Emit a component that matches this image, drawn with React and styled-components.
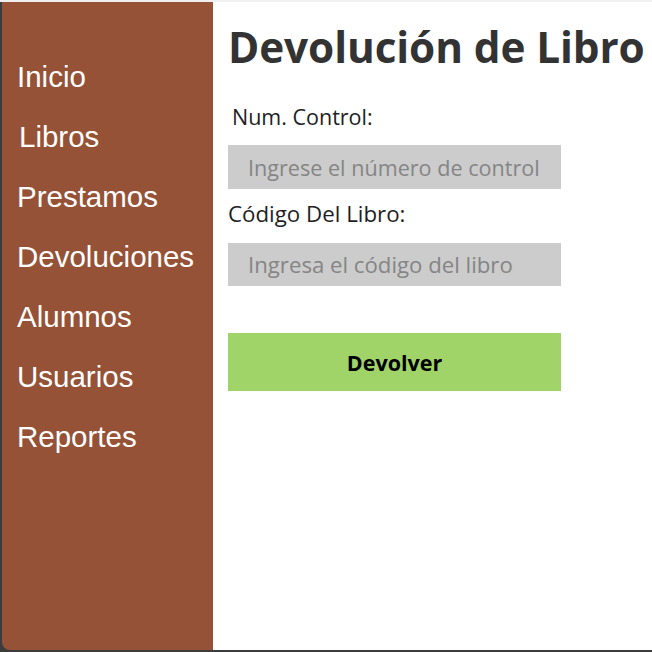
import React from 'react';
import styled, { createGlobalStyle } from 'styled-components';

const GlobalStyle = createGlobalStyle`
  * { box-sizing: border-box; }
  body {
    margin: 0;
    background: #3c3c3c;
  }
`;

const Window = styled.div`
  display: flex;
  width: 652px;
  height: 652px;
  background: #3c3c3c;
  border-top: 2px solid #f0f0f0;
  padding: 0 0 2px 2px;
  overflow: hidden;
`;

const Sidebar = styled.nav`
  flex: 0 0 211px;
  background: #955237;
  border-bottom-left-radius: 8px;
  padding-top: 45px;
`;

const NavList = styled.ul`
  list-style: none;
  margin: 0;
  padding: 0;
`;

const NavItem = styled.li`
  font-family: "Liberation Sans", Arial, sans-serif;
  font-size: 29.5px;
  line-height: 60px;
  color: #ffffff;
  padding-left: ${props => props.$indent || 15}px;
`;

const Main = styled.main`
  flex: 1;
  min-width: 0;
  overflow: hidden;
  background: #ffffff;
  padding: 19px 0 0 15px;
  font-family: "Open Sans", "Noto Sans", sans-serif;
  display: flex;
  flex-direction: column;
  align-items: flex-start;
  white-space: nowrap;
`;

const Title = styled.h1`
  margin: 0;
  font-size: 42.3px;
  line-height: 52px;
  font-weight: 700;
  color: #333333;
  letter-spacing: -0.1px;
`;

const Label = styled.label`
  display: block;
  font-size: ${props => props.$size || 21.5}px;
  line-height: 24px;
  color: #1e1e24;
  margin-top: ${props => props.$top}px;
  padding-left: ${props => props.$indent || 0}px;
`;

const Input = styled.input`
  display: block;
  width: 333px;
  height: ${props => props.$h}px;
  margin-top: ${props => props.$top}px;
  border: none;
  outline: none;
  background: #cccccc;
  padding: 0 0 0 20px;
  font-family: "Open Sans", "Noto Sans", sans-serif;
  font-size: ${props => props.$size || 21.6}px;
  color: #333;

  &::placeholder {
    color: #858585;
  }
`;

const Button = styled.button`
  width: 333px;
  height: 58px;
  margin-top: 47px;
  border: none;
  background: #a0d468;
  font-family: "Open Sans", "Noto Sans", sans-serif;
  font-size: 21.5px;
  font-weight: 700;
  color: #000000;
  cursor: pointer;
`;

const links = ['Inicio', 'Libros', 'Prestamos', 'Devoluciones', 'Alumnos', 'Usuarios', 'Reportes'];

export default function App() {
  return (
    <>
      <GlobalStyle />
      <Window>
        <Sidebar>
          <NavList>
            {links.map(l => (
              <NavItem key={l} $indent={l === 'Libros' ? 17 : 15}>{l}</NavItem>
            ))}
          </NavList>
        </Sidebar>
        <Main>
          <Title>Devolución de Libro</Title>
          <Label $top={32} $indent={4} $size={21.5}>Num. Control:</Label>
          <Input $top={16} $h={44} $size={21.6} placeholder="Ingrese el número de control" />
          <Label $top={13} $size={22.3}>Código Del Libro:</Label>
          <Input $top={17} $h={43} $size={22.2} placeholder="Ingresa el código del libro" />
          <Button>Devolver</Button>
        </Main>
      </Window>
    </>
  );
}
